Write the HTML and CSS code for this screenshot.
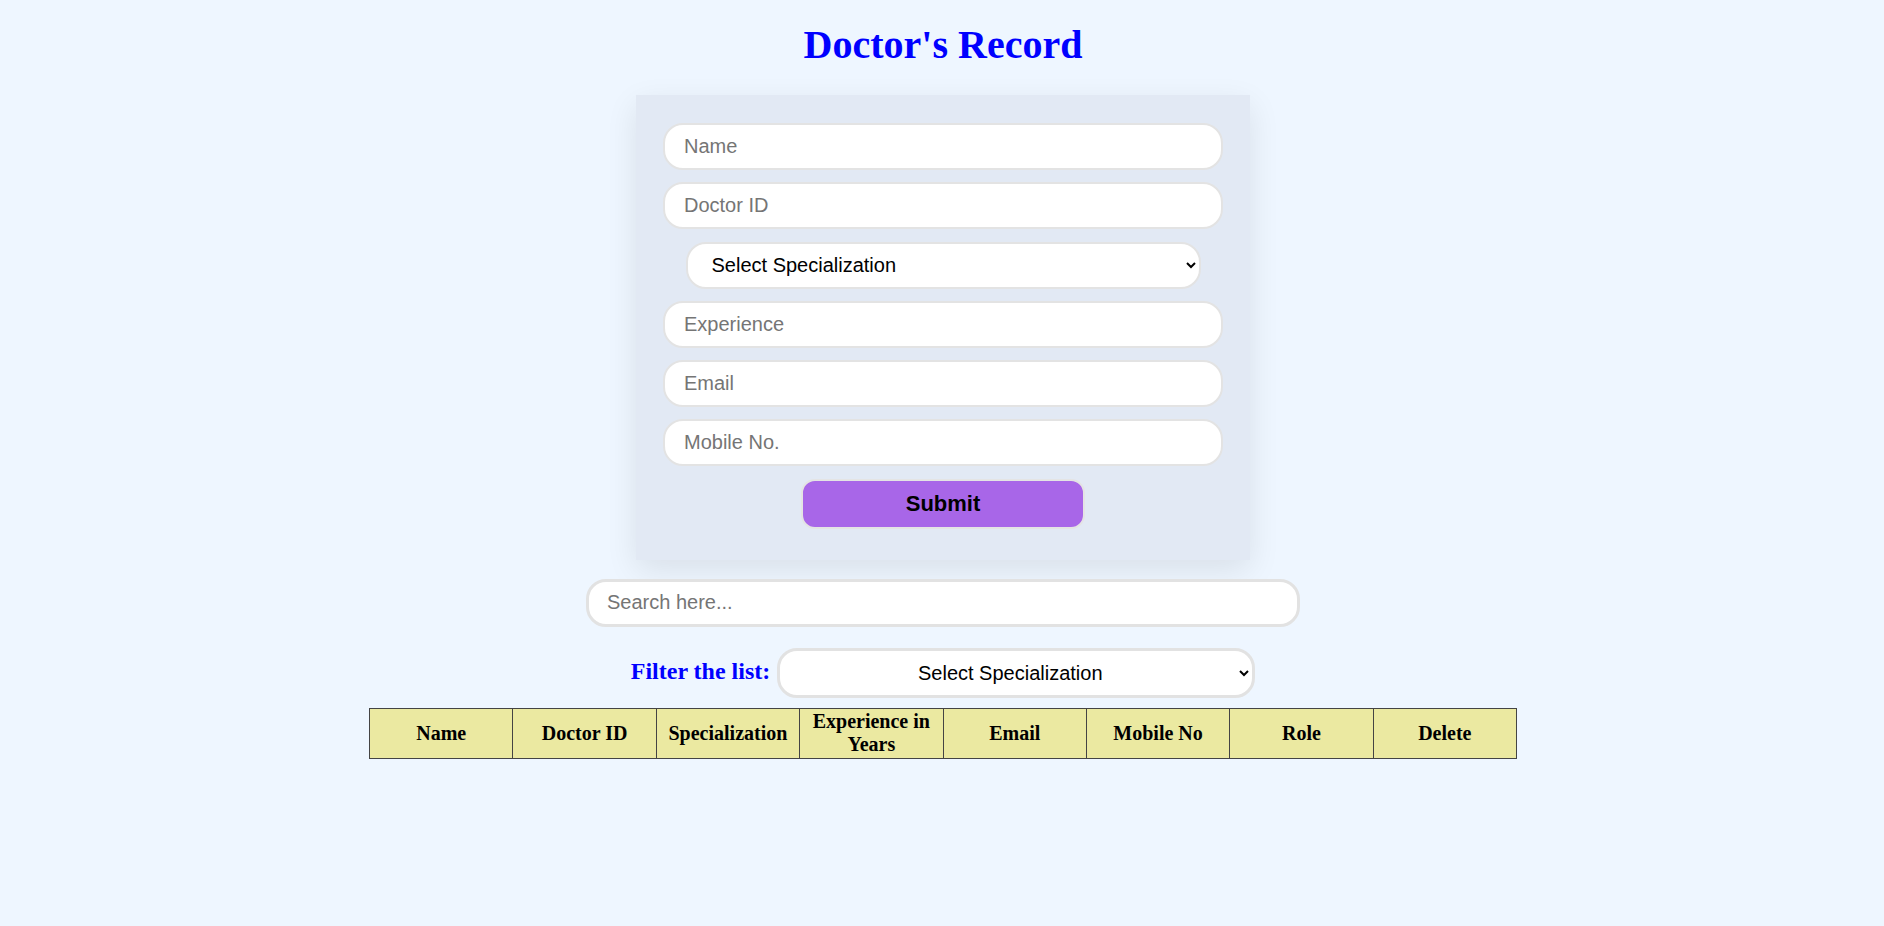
FILE: index.html
```html
<!DOCTYPE html>
<html lang="en">
<head>
<meta charset="utf-8">
<title>Doctor's Record</title>
<link rel="stylesheet" href="styles.css">
</head>
<body>
<h1 class="title">Doctor's Record</h1>
<form class="card">
  <input class="field" type="text" placeholder="Name">
  <input class="field" type="text" placeholder="Doctor ID">
  <select class="field field-select">
    <option>Select Specialization</option>
    <option>Cardiology</option>
    <option>Neurology</option>
    <option>Orthopedics</option>
  </select>
  <input class="field" type="text" placeholder="Experience">
  <input class="field" type="text" placeholder="Email">
  <input class="field" type="text" placeholder="Mobile No.">
  <button class="submit" type="button">Submit</button>
</form>
<input class="search" type="text" placeholder="Search here...">
<div class="filter">
  <label class="filter-label">Filter the list:</label>
  <select class="filter-select">
    <option>Select Specialization</option>
    <option>Cardiology</option>
    <option>Neurology</option>
    <option>Orthopedics</option>
  </select>
</div>
<table class="records">
  <thead>
    <tr>
      <th>Name</th>
      <th>Doctor ID</th>
      <th>Specialization</th>
      <th>Experience in Years</th>
      <th>Email</th>
      <th>Mobile No</th>
      <th>Role</th>
      <th>Delete</th>
    </tr>
  </thead>
  <tbody></tbody>
</table>
</body>
</html>
```
FILE: styles.css
```css
html, body {
  margin: 0;
  padding: 0;
}

body {
  background: #eef6ff;
  font-family: "Liberation Serif", "Times New Roman", serif;
  min-height: 926px;
  padding-left: 2px;
}

.title {
  margin: 22px 0 0;
  line-height: 46px;
  font-size: 40px;
  font-weight: bold;
  text-align: center;
  color: #0000ff;
}

.card {
  box-sizing: border-box;
  width: 614px;
  margin: 27px auto 0;
  padding: 28px 27px 31px;
  background: #e2e9f4;
  box-shadow: 0 10px 30px rgba(0, 0, 0, 0.09);
  display: flex;
  flex-direction: column;
  align-items: center;
  gap: 12.3px;
}

.field {
  box-sizing: border-box;
  width: 560px;
  height: 47px;
  margin: 0;
  border: 2px solid #e3e3e3;
  border-radius: 20px;
  padding: 0 19px;
  background: #ffffff;
  font-family: "Liberation Sans", Arial, sans-serif;
  font-size: 20px;
  color: #000;
  outline: none;
}

.field::placeholder,
.search::placeholder {
  color: #757575;
}

.field-select {
  width: 515px;
  padding: 0 10px 0 20px;
}

.submit {
  box-sizing: border-box;
  width: 284px;
  height: 50px;
  margin: 0;
  border: 2px solid #e4e4e4;
  border-radius: 14px;
  background: #a866e8;
  color: #000;
  font-family: "Liberation Sans", Arial, sans-serif;
  font-size: 22px;
  font-weight: bold;
}

.search {
  display: block;
  box-sizing: border-box;
  width: 714px;
  height: 48px;
  margin: 19px auto 0;
  border: 3px solid #e2e2e2;
  border-radius: 20px;
  padding: 0 18px;
  background: #fff;
  font-family: "Liberation Sans", Arial, sans-serif;
  font-size: 20px;
  outline: none;
}

.filter {
  display: flex;
  justify-content: center;
  align-items: center;
  gap: 7px;
  margin-top: 21px;
}

.filter-label {
  font-family: "Liberation Serif", "Times New Roman", serif;
  font-size: 24px;
  font-weight: bold;
  color: #0000ff;
  position: relative;
  top: -1px;
}

.filter-select {
  box-sizing: border-box;
  width: 478px;
  height: 50px;
  border: 3px solid #e2e2e2;
  border-radius: 20px;
  padding: 0 10px;
  background: #fff;
  color: #000;
  font-family: "Liberation Sans", Arial, sans-serif;
  font-size: 20px;
  text-align: center;
  text-align-last: center;
}

.records {
  width: 1148px;
  margin: 10px auto 0;
  border-collapse: collapse;
  table-layout: fixed;
}

.records th {
  border: 1px solid #444;
  background: #ebe9a1;
  padding: 1px;
  font-family: "Liberation Serif", "Times New Roman", serif;
  font-size: 20px;
  font-weight: bold;
  line-height: 23px;
  height: 47px;
  color: #000;
  text-align: center;
  vertical-align: middle;
}
```
